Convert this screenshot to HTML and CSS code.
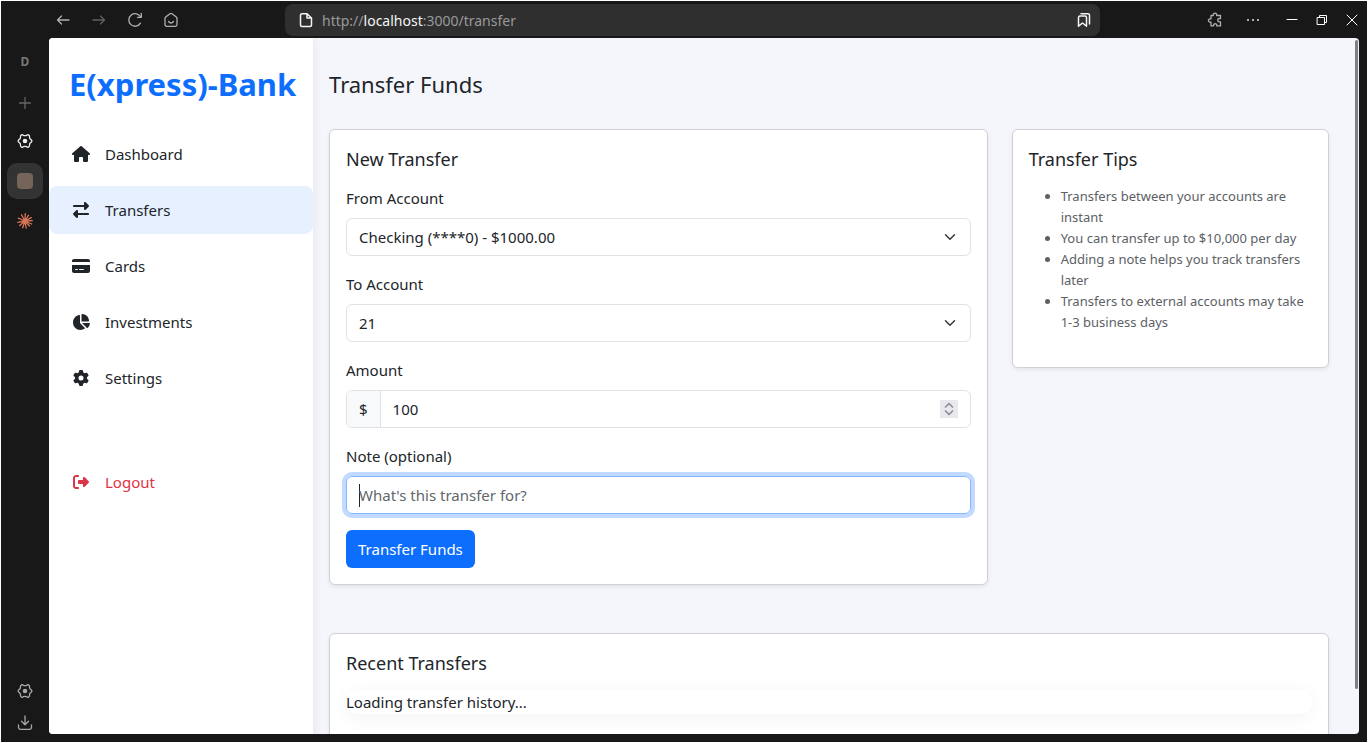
FILE: index.html
```html
<!DOCTYPE html>
<html lang="en">
<head>
<meta charset="utf-8">
<title>Transfer Funds</title>
<link rel="stylesheet" href="styles.css">
</head>
<body>
<div class="browser">
  <header class="toolbar">
    <div class="toolbar-nav">
      <button class="tool" aria-label="Back"><svg width="16" height="16" viewBox="0 0 16 16"><path d="M14 8H2.500M6.500 4l-4 4 4 4"/></svg></button>
      <button class="tool tool-off" aria-label="Forward"><svg width="16" height="16" viewBox="0 0 16 16"><path d="M2 8h11.500M9.500 4l4 4-4 4"/></svg></button>
      <button class="tool" aria-label="Reload"><svg width="16" height="16" viewBox="0 0 16 16"><path d="M13.500 11.200A6.300 6.300 0 1 1 13.700 5M14.300 1.500V5.300H10.500"/></svg></button>
      <button class="tool" aria-label="Home"><svg width="16" height="16" viewBox="0 0 16 16"><path d="M2 6.500Q2 5.600 2.700 5.100L7 1.800Q8 1.100 9 1.800L13.300 5.100Q14 5.600 14 6.500V12.500Q14 14.300 12.200 14.300H3.800Q2 14.300 2 12.500zM5.500 9.500Q8 12.500 10.500 9.500"/></svg></button>
    </div>
    <div class="address">
      <svg class="page-icon" width="16" height="16" viewBox="0 0 16 16"><path d="M4 1.700h5L13.500 6v7q0 1.500-1.500 1.500H4q-1.500 0-1.500-1.500V3.200Q2.500 1.700 4 1.700zM9 1.700V6h4.500"/></svg>
      <span class="url">http://<span class="host">localhost</span>:3000/transfer</span>
      <button class="bookmark" aria-label="Bookmarks"><svg width="16" height="16" viewBox="0 0 16 16"><path d="M2.500 5.500q0-1.500 1.500-1.500h5q1.500 0 1.500 1.500v8.700L6.500 11l-4 3.200zM5 1.700h7q1.500 0 1.500 1.500V12"/></svg></button>
    </div>
    <div class="toolbar-end">
      <button class="tool tool-ext" aria-label="Extensions"><svg width="16" height="16" viewBox="0 0 16 16"><path d="M4 3.500h2.300C6.100 2 7 1.200 8 1.200s1.900.8 1.700 2.300h3.800v3h-1c-1.200 0-1.800.8-1.800 1.700s.6 1.700 1.800 1.700h1v4h-3.700c.2-1.500-.7-2.200-1.600-2.200s-1.800.7-1.600 2.200H4v-3.700c-1.600.2-2.600-.6-2.600-1.700S2.400 6.600 4 6.800z"/></svg></button>
      <button class="tool tool-more" aria-label="More"><svg class="solid" width="16" height="16" viewBox="0 0 16 16"><path d="M2 7h2v2H2zM7 7h2v2H7zM12 7h2v2h-2z"/></svg></button>
      <button class="tool window" aria-label="Minimize"><svg width="16" height="16" viewBox="0 0 16 16"><path d="M3 7.500h10"/></svg></button>
      <button class="tool window" aria-label="Restore"><svg width="16" height="16" viewBox="0 0 16 16"><path d="M3.500 5.500h7v7h-7zM5.500 5.500v-2h7v7h-2"/></svg></button>
      <button class="tool window" aria-label="Close"><svg width="16" height="16" viewBox="0 0 16 16"><path d="M3 3l10 10M13 3L3 13"/></svg></button>
    </div>
  </header>

  <aside class="rail">
    <span class="space-name">D</span>
    <button class="rail-btn rail-add" aria-label="New tab"><svg width="16" height="16" viewBox="0 0 16 16"><path d="M8 2.500v11M2.500 8h11"/></svg></button>
    <button class="rail-btn rail-light" aria-label="Settings tab"><svg width="16" height="16" viewBox="0 0 16 16"><path d="M4.500 1.900Q5.600 1.300 6.300 2.300Q8 3.100 9.700 2.300Q10.400 1.300 11.500 1.900Q12.900 2.800 12.500 4Q12.400 5.800 14 6.600Q14.900 7.200 14.900 8T14 9.400Q12.400 10.200 12.500 12Q12.900 13.200 11.500 14.100Q10.400 14.700 9.700 13.700Q8 12.900 6.300 13.700Q5.600 14.700 4.500 14.100Q3.100 13.200 3.500 12Q3.600 10.200 2 9.400Q1.100 8.800 1.100 8T2 6.600Q3.600 5.800 3.500 4Q3.100 2.800 4.500 1.900z"/><circle class="dot" cx="8" cy="8" r="2.300"/></svg></button>
    <button class="rail-btn rail-active" aria-label="Current tab"><span class="swatch"></span></button>
    <button class="rail-btn rail-burst" aria-label="Assistant tab"><svg width="16" height="16" viewBox="0 0 16 16"><path d="M8 8L8.300.7M8 8l3.600-5.800M8 8l6.300-3.400M8 8l7.300-.3M8 8l6.700 3M8 8l4.500 5M8 8l1.200 7.200M8 8l-2.300 6.800M8 8l-5.300 4.500M8 8L.8 9.300M8 8L1.300 5.200M8 8L4.500 1.700"/></svg></button>
    <div class="rail-bottom">
      <button class="rail-btn" aria-label="Settings"><svg width="16" height="16" viewBox="0 0 16 16"><path d="M4.500 1.900Q5.600 1.300 6.300 2.300Q8 3.100 9.700 2.300Q10.400 1.300 11.500 1.900Q12.900 2.800 12.500 4Q12.400 5.800 14 6.600Q14.900 7.200 14.900 8T14 9.400Q12.400 10.200 12.500 12Q12.900 13.200 11.500 14.100Q10.400 14.700 9.700 13.700Q8 12.900 6.300 13.700Q5.600 14.700 4.500 14.100Q3.100 13.200 3.500 12Q3.600 10.200 2 9.400Q1.100 8.800 1.100 8T2 6.600Q3.600 5.800 3.500 4Q3.100 2.800 4.500 1.900z"/><circle class="dot" cx="8" cy="8" r="2.300"/></svg></button>
      <button class="rail-btn" aria-label="Downloads"><svg width="16" height="16" viewBox="0 0 16 16"><path d="M8 1v8.500M4.500 6.200L8 9.700l3.500-3.500M1.500 10v2.500q0 1.800 1.800 1.800h9.400q1.800 0 1.800-1.800V10"/></svg></button>
    </div>
  </aside>

  <div class="page">
    <nav class="sidebar">
      <h1 class="brand">E(xpress)-Bank</h1>
      <a class="nav-link" href="#dashboard"><span class="nav-icon"><svg width="18" height="16" viewBox="0 0 576 512"><path d="M575.8 255.500c0 18-15 32.100-32 32.100l-32 0 .7 160.200c0 2.700-.2 5.400-.5 8.100l0 16.200c0 22.100-17.900 40-40 40l-16 0c-1.100 0-2.200 0-3.300-.1c-1.400 .1-2.800 .1-4.200 .1L416 512l-24 0c-22.100 0-40-17.900-40-40l0-24 0-64c0-17.700-14.300-32-32-32l-64 0c-17.700 0-32 14.300-32 32l0 64 0 24c0 22.100-17.900 40-40 40l-24 0-31.900 0c-1.500 0-3-.1-4.500-.2c-1.200 .1-2.400 .2-3.600 .2l-16 0c-22.100 0-40-17.900-40-40l0-112c0-.9 0-1.900 .1-2.800l0-69.700-32 0c-18 0-32-14-32-32.100c0-9 3-17 10-24L266.400 8c7-7 15-8 22-8s15 2 21 7L564.800 231.500c8 7 12 15 11 24z"/></svg></span>Dashboard</a>
      <a class="nav-link active" href="#transfers"><span class="nav-icon"><svg width="16" height="16" viewBox="0 0 512 512"><path d="M32 96l320 0 0-64c0-12.900 7.800-24.600 19.800-29.600s25.700-2.200 34.900 6.900l96 96c6 6 9.400 14.100 9.400 22.600s-3.400 16.600-9.400 22.600l-96 96c-9.200 9.200-22.900 11.900-34.900 6.900s-19.800-16.600-19.800-29.600l0-64L32 160c-17.700 0-32-14.300-32-32s14.300-32 32-32zM480 352c17.700 0 32 14.300 32 32s-14.300 32-32 32l-320 0 0 64c0 12.900-7.800 24.600-19.800 29.600s-25.700 2.200-34.900-6.900l-96-96c-6-6-9.400-14.100-9.400-22.600s3.400-16.600 9.400-22.600l96-96c9.200-9.200 22.900-11.900 34.900-6.900s19.800 16.600 19.800 29.600l0 64 320 0z"/></svg></span>Transfers</a>
      <a class="nav-link" href="#cards"><span class="nav-icon"><svg width="18" height="16" viewBox="0 0 576 512"><path d="M64 32C28.700 32 0 60.700 0 96l0 32 576 0 0-32c0-35.300-28.700-64-64-64L64 32zM576 224L0 224 0 416c0 35.300 28.700 64 64 64l448 0c35.300 0 64-28.700 64-64l0-192zM112 352l64 0c8.800 0 16 7.200 16 16s-7.200 16-16 16l-64 0c-8.800 0-16-7.200-16-16s7.200-16 16-16zm112 16c0-8.800 7.200-16 16-16l128 0c8.800 0 16 7.200 16 16s-7.200 16-16 16l-128 0c-8.800 0-16-7.200-16-16z"/></svg></span>Cards</a>
      <a class="nav-link" href="#investments"><span class="nav-icon"><svg width="18" height="16" viewBox="0 0 576 512"><path d="M304 240l0-223.400c0-9 7-16.600 16-16.600C443.700 0 544 100.300 544 224c0 9-7.600 16-16.600 16L304 240zM32 272C32 150.700 122.100 50.300 239 34.300c9.200-1.300 17 6.100 17 15.400L256 288 412.500 444.500c6.700 6.700 6.200 17.700-1.500 23.100C371.800 495.600 323.800 512 272 512C139.500 512 32 404.600 32 272zm526.400 16c9.300 0 16.600 7.800 15.400 17c-7.700 55.900-34.600 105.600-73.900 142.300c-6 5.600-15.400 5.200-21.200-.7L320 288l238.400 0z"/></svg></span>Investments</a>
      <a class="nav-link" href="#settings"><span class="nav-icon"><svg width="16" height="16" viewBox="0 0 512 512"><path d="M495.900 166.600c3.200 8.700 .5 18.400-6.400 24.600l-43.300 39.400c1.100 8.300 1.700 16.800 1.700 25.400s-.6 17.100-1.700 25.400l43.300 39.400c6.900 6.200 9.600 15.900 6.400 24.600c-4.400 11.900-9.700 23.300-15.800 34.300l-4.700 8.100c-6.600 11-14 21.400-22.100 31.200c-5.900 7.200-15.700 9.600-24.500 6.800l-55.700-17.700c-13.400 10.300-28.200 18.900-44 25.400l-12.500 57.100c-2 9.100-9 16.300-18.200 17.800c-13.800 2.300-28 3.500-42.500 3.500s-28.700-1.200-42.500-3.500c-9.200-1.500-16.200-8.700-18.200-17.800l-12.500-57.100c-15.800-6.500-30.600-15.100-44-25.400L83.100 425.900c-8.800 2.800-18.600 .3-24.500-6.800c-8.100-9.800-15.500-20.200-22.100-31.200l-4.700-8.100c-6.100-11-11.400-22.400-15.800-34.300c-3.200-8.700-.5-18.400 6.400-24.600l43.300-39.400C64.600 273.100 64 264.600 64 256s.6-17.100 1.700-25.400L22.400 191.200c-6.900-6.200-9.600-15.900-6.400-24.600c4.400-11.900 9.700-23.300 15.800-34.300l4.700-8.100c6.600-11 14-21.400 22.100-31.200c5.900-7.200 15.700-9.600 24.500-6.800l55.700 17.700c13.400-10.300 28.200-18.900 44-25.400l12.500-57.100c2-9.100 9-16.300 18.200-17.800C227.300 1.200 241.500 0 256 0s28.700 1.200 42.500 3.500c9.200 1.500 16.200 8.700 18.200 17.800l12.500 57.100c15.800 6.500 30.600 15.100 44 25.400l55.700-17.700c8.800-2.800 18.600-.3 24.500 6.800c8.100 9.800 15.500 20.200 22.100 31.200l4.700 8.100c6.100 11 11.400 22.400 15.800 34.300zM256 336a80 80 0 1 0 0-160 80 80 0 1 0 0 160z"/></svg></span>Settings</a>
      <a class="nav-link logout" href="#logout"><span class="nav-icon"><svg width="16" height="16" viewBox="0 0 512 512"><path d="M377.900 105.900L500.700 228.700c7.200 7.200 11.300 17.100 11.300 27.300s-4.100 20.100-11.300 27.300L377.900 406.100c-6.400 6.400-15 9.900-24 9.900c-18.700 0-33.900-15.200-33.900-33.900l0-62.100-128 0c-17.700 0-32-14.300-32-32l0-64c0-17.700 14.300-32 32-32l128 0 0-62.100c0-18.700 15.200-33.900 33.900-33.900c9 0 17.600 3.600 24 9.900zM160 96L96 96c-17.700 0-32 14.300-32 32l0 256c0 17.700 14.300 32 32 32l64 0c17.700 0 32 14.300 32 32s-14.300 32-32 32l-64 0c-53 0-96-43-96-96L0 128C0 75 43 32 96 32l64 0c17.700 0 32 14.300 32 32s-14.300 32-32 32z"/></svg></span>Logout</a>
    </nav>

    <main class="content">
      <h2 class="page-title">Transfer Funds</h2>
      <div class="columns">
        <section class="card card-form">
          <h3 class="card-title">New Transfer</h3>
          <form class="form">
            <div class="field">
              <label for="from">From Account</label>
              <select id="from" class="control select"><option>Checking (****0) - $1000.00</option></select>
            </div>
            <div class="field">
              <label for="to">To Account</label>
              <select id="to" class="control select"><option>21</option></select>
            </div>
            <div class="field">
              <label for="amount">Amount</label>
              <div class="amount-group">
                <span class="prefix">$</span>
                <input id="amount" class="amount" type="number" value="100">
                <span class="spinner" aria-hidden="true"><svg width="18" height="18" viewBox="0 0 18 18"><path d="M5.500 7L9 3.500 12.500 7M5.500 11L9 14.500 12.500 11"/></svg></span>
              </div>
            </div>
            <div class="field">
              <label for="note">Note (optional)</label>
              <input id="note" class="control note" type="text" placeholder="What's this transfer for?">
            </div>
            <button class="submit" type="button">Transfer Funds</button>
          </form>
        </section>
        <section class="card card-tips">
          <h3 class="card-title">Transfer Tips</h3>
          <ul class="tips">
            <li>Transfers between your accounts are instant</li>
            <li>You can transfer up to $10,000 per day</li>
            <li>Adding a note helps you track transfers later</li>
            <li>Transfers to external accounts may take 1-3 business days</li>
          </ul>
        </section>
      </div>
      <section class="card card-recent">
        <h3 class="card-title">Recent Transfers</h3>
        <div class="history">Loading transfer history...</div>
      </section>
    </main>
    <div class="scroll-thumb"></div>
  </div>
</div>
</body>
</html>
```
FILE: styles.css
```css
* { box-sizing: border-box; }
body {
  margin: 0;
  background: #fff;
  color: #212529;
  font: 15px/24px "Noto Sans", sans-serif;
}
h1, h2, h3, ul { margin: 0; font-weight: 400; }
button { border: 0; padding: 0; background: none; font: inherit; color: inherit; }
svg { flex: none; display: block; }

/* Browser frame */
.browser {
  display: grid;
  grid-template: 37px minmax(0, 1fr) / 48px minmax(0, 1fr);
  height: 100vh;
  border: 1px solid #fff;
  padding: 0 8px 8px 0;
  background: #181818;
  background-clip: padding-box;
}
.browser svg { stroke-linecap: round; stroke-linejoin: round; }
.toolbar {
  grid-column: 1 / -1;
  display: flex;
  align-items: center;
  margin-right: -8px;
}
.toolbar-nav { flex: none; display: flex; width: 284px; padding-left: 44px; }
.toolbar svg, .rail svg { fill: none; stroke: currentColor; stroke-width: 1.3; }
.toolbar .solid { fill: currentColor; stroke: none; }
.tool {
  display: flex;
  align-items: center;
  justify-content: center;
  width: 36px;
  height: 32px;
  color: #b0b0b0;
}
.tool-off { color: #606060; }
.address {
  flex: 1;
  display: flex;
  align-items: center;
  gap: 8px;
  height: 32px;
  padding: 0 8px 0 13px;
  border-radius: 8px;
  background: #2f2f2f;
}
.page-icon { color: #f4f4f4; }
.toolbar .page-icon, .bookmark svg { stroke-width: 1.5; }
.url { flex: 1; padding-top: 2px; font-size: 14px; color: #999; }
.host { color: #f4f4f4; }
.bookmark { color: #f4f4f4; }
.toolbar-end { flex: none; display: flex; justify-content: flex-end; width: 267px; }
.tool-ext, .tool-more { width: 38px; }
.toolbar-end .window { width: 30px; color: #fff; }
.tool-more { margin-right: 5px; }
.toolbar .window svg { stroke-width: 1; }

.rail {
  display: flex;
  flex-direction: column;
  align-items: center;
  margin-bottom: -5px;
  color: #a8a8a8;
}
.space-name { margin: 12px 0 11px; font-size: 12px; font-weight: 700; color: #777; }
.rail-btn {
  display: flex;
  align-items: center;
  justify-content: center;
  width: 36px;
  height: 36px;
}
.rail-add { color: #666; }
.rail-light { margin: 2px 0 4px; color: #eee; }
.rail .dot { fill: currentColor; stroke: none; }
.rail-active { border-radius: 10px; background: #333; }
.swatch { width: 16px; height: 16px; border-radius: 4px; background: #75645a; }
.rail-burst { margin-top: 4px; color: #d97757; }
.rail-bottom { margin-top: auto; }
.rail-bottom .rail-btn { height: 32px; }

/* Bank page */
.page {
  position: relative;
  display: grid;
  grid-template-columns: 264px minmax(0, 1fr);
  overflow: hidden;
  border-radius: 4px;
  background: #f5f6fb;
}
.sidebar {
  display: flex;
  flex-direction: column;
  gap: 8px;
  background: #fff;
  box-shadow: 2px 0 10px rgba(0, 0, 0, 0.05);
}
.brand {
  margin: 24px 0 16px 20px;
  color: #0d6efd;
  font-size: 31px;
  font-weight: 700;
  line-height: 44px;
  white-space: nowrap;
}
.nav-link {
  display: flex;
  align-items: center;
  gap: 16px;
  padding: 12px 24px;
  border-radius: 8px;
  color: #212529;
  text-decoration: none;
}
.nav-link.active { background: #e6f0ff; }
.nav-link.logout { margin-top: 48px; color: #dc3545; }
.nav-icon { display: flex; justify-content: center; width: 16px; }
.nav-icon svg { fill: currentColor; }

.content { padding: 32px 30px 0 16px; }
.page-title { margin-bottom: 30px; font-size: 22px; line-height: 29px; }
.columns {
  display: grid;
  grid-template-columns: repeat(12, minmax(0, 1fr));
  column-gap: 24px;
  align-items: start;
  margin-bottom: 48px;
}
.card {
  padding: 16px;
  border: 1px solid #d0d1d4;
  border-radius: 6px;
  background: #fff;
  box-shadow: 0 2px 4px rgba(0, 0, 0, 0.075);
}
.card-form { grid-column: span 8; }
.card-tips { grid-column: span 4; }
.card-recent { height: 160px; }
.card-title { margin-bottom: 14px; font-size: 18px; line-height: 26px; }
.form { display: flex; flex-direction: column; align-items: flex-start; gap: 16px; }
.field { display: flex; flex-direction: column; gap: 8px; width: 100%; }
.control {
  width: 100%;
  height: 38px;
  padding: 6px 12px;
  border: 1px solid #dee2e6;
  border-radius: 6px;
  background: #fff;
  color: #212529;
  font: inherit;
}
.select {
  appearance: none;
  background: #fff url("data:image/svg+xml,%3Csvg xmlns='http://www.w3.org/2000/svg' viewBox='0 0 16 16'%3E%3Cpath fill='none' stroke='%23343a40' stroke-linecap='round' stroke-linejoin='round' stroke-width='2' d='m2 5 6 6 6-6'/%3E%3C/svg%3E") no-repeat right 12px center / 16px 12px;
}
.amount-group {
  display: flex;
  align-items: center;
  height: 38px;
  border: 1px solid #dee2e6;
  border-radius: 6px;
  overflow: hidden;
}
.prefix {
  padding: 6px 12px;
  border-right: 1px solid #dee2e6;
  background: #f8f9fa;
}
.amount {
  flex: 1;
  min-width: 0;
  padding: 0 12px;
  border: 0;
  outline: 0;
  color: #212529;
  font: inherit;
  appearance: textfield;
}
.amount::-webkit-inner-spin-button { appearance: none; margin: 0; }
.spinner { margin-right: 12px; background: #e9e9ed; }
.spinner svg { fill: none; stroke: #8f8f9d; stroke-width: 1.7; }
.note {
  border-color: #86b7fe;
  outline: 0;
  background: linear-gradient(#212529, #212529) no-repeat 12px center / 1px 23px;
  box-shadow: 0 0 0 4px #c2daff;
}
.note::placeholder { color: #62676b; opacity: 1; }
.submit {
  height: 38px;
  padding: 0 12px;
  border-radius: 6px;
  background: #0d6efd;
  color: #fff;
}
.tips {
  margin-bottom: 18px;
  padding-left: 32px;
  color: #5c6165;
  font-size: 13px;
  line-height: 21px;
}
.history {
  border-radius: 12px;
  box-shadow: 0 4px 20px rgba(0, 0, 0, 0.05);
}
.scroll-thumb {
  position: absolute;
  top: 2px;
  right: 1px;
  bottom: 45px;
  width: 3px;
  border-radius: 2px;
  background: #808083;
}
```
